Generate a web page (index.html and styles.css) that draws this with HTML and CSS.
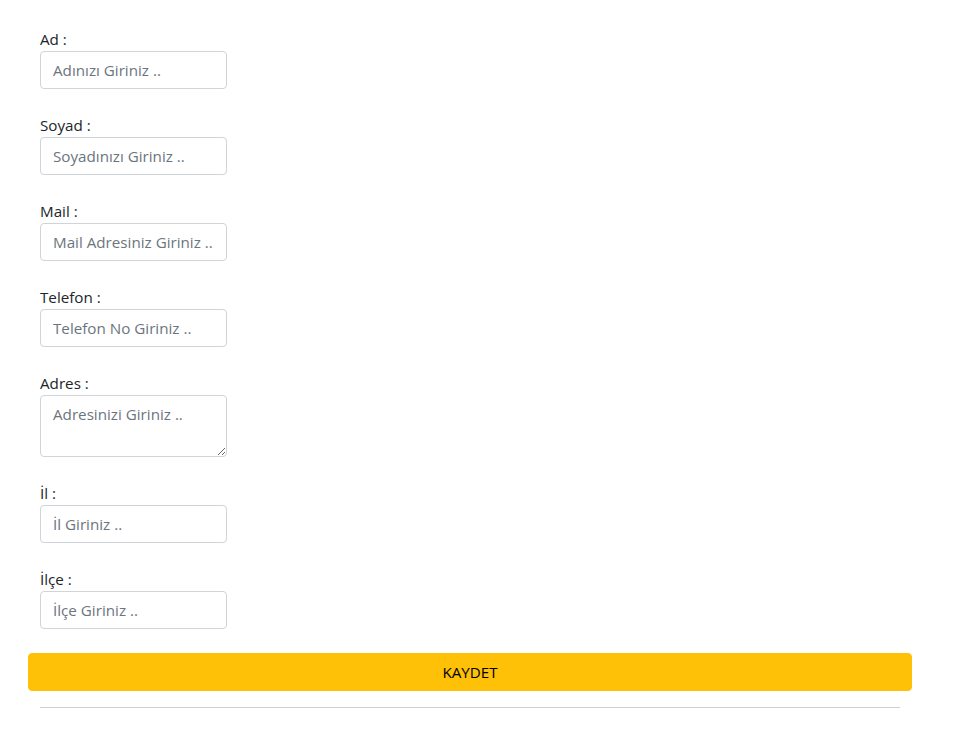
FILE: index.html
```html
<!DOCTYPE html>
<html lang="tr">
<head>
<meta charset="utf-8">
<title>Form</title>
<link rel="stylesheet" href="styles.css">
</head>
<body>
<div class="container">
  <form class="form">
    <div class="field">
      <label class="label">Ad :</label>
      <input class="control" type="text" placeholder="Adınızı Giriniz ..">
    </div>
    <div class="field">
      <label class="label">Soyad :</label>
      <input class="control" type="text" placeholder="Soyadınızı Giriniz ..">
    </div>
    <div class="field">
      <label class="label">Mail :</label>
      <input class="control" type="text" placeholder="Mail Adresiniz Giriniz ..">
    </div>
    <div class="field">
      <label class="label">Telefon :</label>
      <input class="control" type="text" placeholder="Telefon No Giriniz ..">
    </div>
    <div class="field">
      <label class="label">Adres :</label>
      <textarea class="control area" rows="2" placeholder="Adresinizi Giriniz .."></textarea>
    </div>
    <div class="field">
      <label class="label">İl :</label>
      <input class="control" type="text" placeholder="İl Giriniz ..">
    </div>
    <div class="field">
      <label class="label">İlçe :</label>
      <input class="control" type="text" placeholder="İlçe Giriniz ..">
    </div>
    <button class="btn" type="button">KAYDET</button>
  </form>
  <hr class="rule">
</div>
</body>
</html>
```
FILE: styles.css
```css
* { box-sizing: border-box; }
html, body { margin: 0; padding: 0; background: #fff; }
body {
  font-family: "Open Sans", "Noto Sans", sans-serif;
  font-size: 15.2px;
  line-height: 24px;
  color: #212529;
}
.container {
  width: 884px;
  margin-left: 28px;
  padding-top: 27px;
}
.form { display: flex; flex-direction: column; }
.field {
  display: flex;
  flex-direction: column;
  align-items: flex-start;
  padding: 0 12px;
  margin-bottom: 24px;
}
.label { display: block; height: 24px; }
.control {
  display: block;
  width: 187px;
  height: 38px;
  padding: 6px 12px;
  border: 1px solid #ced4da;
  border-radius: 4px;
  font-family: inherit;
  font-size: 15.2px;
  line-height: 24px;
  color: #212529;
  background: #fff;
  outline: none;
}
.control::placeholder { color: #6c757d; opacity: 1; }
.area { height: 62px; resize: vertical; }
.btn {
  display: block;
  width: 100%;
  height: 38px;
  background: #ffc107;
  border: 1px solid #ffc107;
  border-radius: 4px;
  font-family: inherit;
  font-size: 15.2px;
  color: #000;
  padding: 6px 12px;
  cursor: pointer;
}
.rule {
  margin: 16px 12px 0;
  border: 0;
  border-top: 1px solid #cfcfcf;
}
```
